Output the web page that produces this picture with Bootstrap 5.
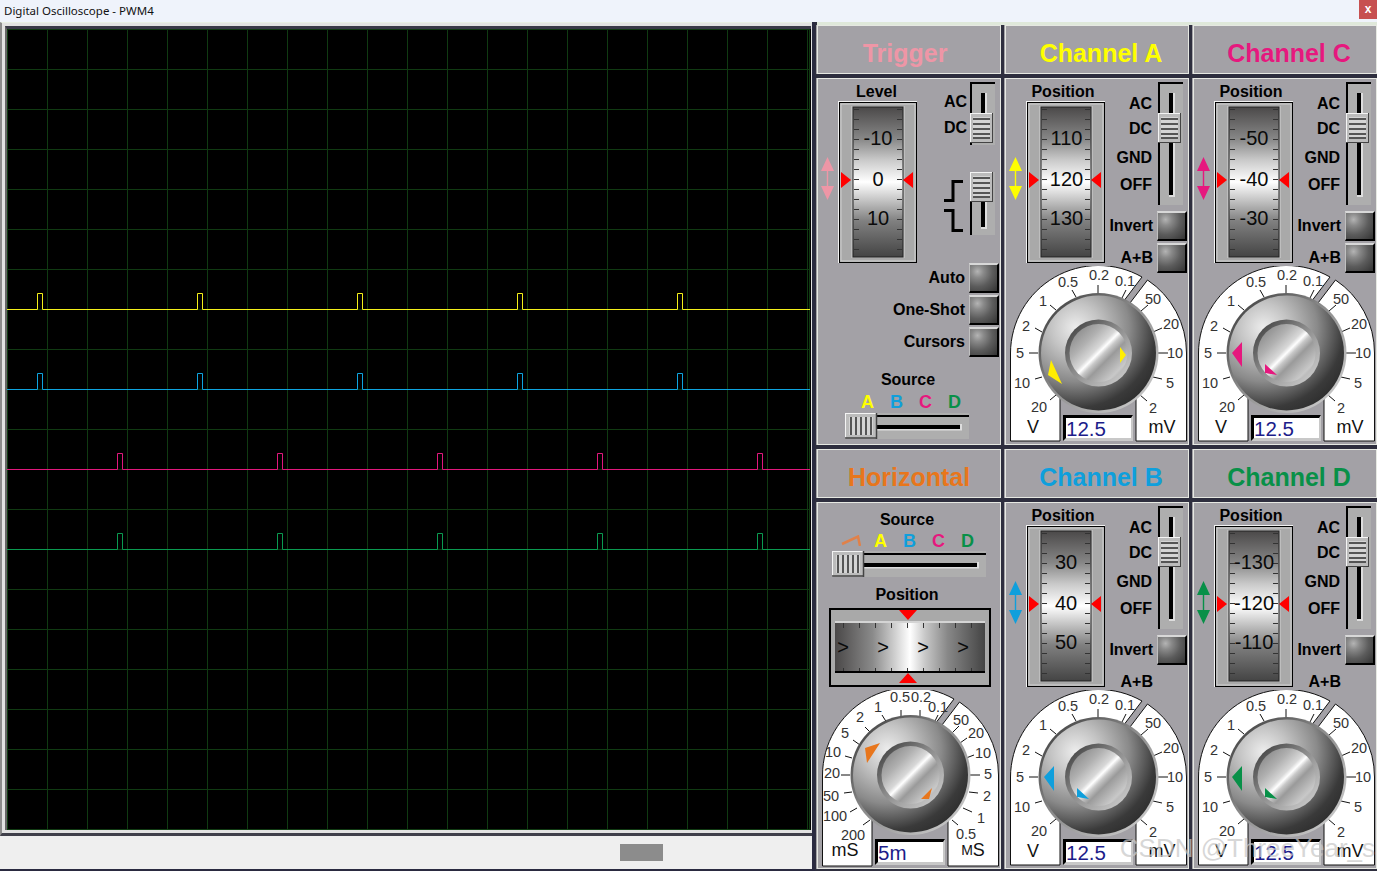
<!DOCTYPE html>
<html lang="en">
<head>
<meta charset="utf-8">
<title>Digital Oscilloscope - PWM4</title>
<link href="https://cdn.jsdelivr.net/npm/bootstrap@5.3.0/dist/css/bootstrap.min.css" rel="stylesheet">
<style>
html,body{margin:0;width:1377px;height:871px;overflow:hidden;background:#2e2e3e}
body{font-family:"Liberation Sans",Arial,sans-serif;color:#000;line-height:1.2}
svg{display:block;flex:none}
svg text{font-family:"Liberation Sans",Arial,sans-serif}
.defs{width:0;height:0}
.titlebar{height:22px;background:#eff3fb;font:11.5px/21px "Noto Sans",sans-serif;color:#111;padding-left:4px}
.close-x{width:18px;height:19px;background:#c75050;color:#fff;font:bold 12px/18px "Liberation Sans",sans-serif;text-align:center}
.main{height:849px}
.scope-col{width:815px;background:#2a2a40;padding-right:3px}
.scope-frame{height:814px;background:#e2e2e2;border-top:1px solid #e8efe4;border-left:2px solid #8c8c8c;padding:3px 1px 3px 3px;border-bottom:3px solid #3f3f4a}
.screen{height:804px;border-left:2px solid #666;border-top:3px solid #3a3a48;background:#000;overflow:hidden}
.status{height:33px;background:#efefef;padding-right:149px}
.status-thumb{width:43px;height:17px;background:#8c8c8c}
.deck{grid-template-columns:repeat(3,184px);grid-template-rows:49px 367px 49px 367px;gap:4px;border-top:3px solid #dfe8da;margin-left:2px}
.panel{background:#a3a1a6;box-shadow:inset 0 0 0 1px #e6e8e2,-1px 0 0 #a3a1a6;position:relative}
.phead{font-size:25px;font-weight:700;padding-top:7px}
.c-tr{color:#ee96a6}.c-a{color:#ff0}.c-b{color:#0f9fdc}.c-c{color:#e6187e}.c-d{color:#089048}.c-h{color:#e8761c}
.lb{font-size:16px;font-weight:700;line-height:20px;white-space:nowrap}
.top{height:195px}
.top-tr{height:185px}
.arrows{margin-left:4px;padding-top:79px;width:14px}
.tape-col{margin-left:3px;width:79px}
.tape-col .lb{height:23px;line-height:27px;text-align:center;padding-right:5px}
.tape-col .lb.lv{padding-right:2px}
.ctl-col{width:82px;padding-top:4px}
.cpl{height:129px}
.cpl-tr{height:63px}
.cpl-labels{padding-top:10px;margin-right:6px;text-align:right}
.cpl-labels-tr{padding-top:8px;margin-right:3px}
.l1{height:24px;line-height:24px}.l2{height:26px;line-height:26px}.l3{height:32px;line-height:32px}.l4{height:22px;line-height:22px}.l5{height:30px;line-height:28px}
.sl-r{margin-right:4px}
.edge{margin-top:27px;height:63px}
.edge svg:first-child{margin:8px 6px 0 0}
.led-row{height:30px;margin-bottom:2px}
.led-row .lb{margin-right:4px}
.ab-row{padding-right:30px}
.btn.led{width:30px;height:30px;padding:0;border:0;border-radius:0;background:radial-gradient(circle at 28% 25%,#b4b4b4 0,#8a8a8a 22%,#5c5c5c 55%,#333 100%);border-top:2px solid #d8d8d8;border-left:1px solid #c0c0c0;border-right:2px solid #000;border-bottom:2px solid #000}
.led-rows{padding-right:2px}
.src-t{margin-top:13px;text-align:center;padding-right:2px}
.abcd{font-size:18px;font-weight:700;line-height:22px;height:22px;margin-top:1px;padding-left:36px}
.abcd span{width:29px;text-align:center}
.sl-h{margin-left:28px}
.h-src{padding-top:8px;text-align:center;padding-right:4px}
.abcd-h{height:21px;margin-top:0;padding-left:24px}
.abcd-h svg{margin-right:5px}
.sl-hh{margin:0 0 0 15px}
.h-pos{margin-top:8px;text-align:center;padding-right:4px;margin-bottom:3px}
.h-tape{margin:0 0 3px 12px}
.dial{height:179px;margin-top:-7px}
.dial-h{margin-top:0}
.val{position:absolute;left:58px;top:149px;width:70px;height:26px;background:#fff;border-top:3px solid #000;border-left:3px solid #000;border-right:2px solid #c8c8c8;border-bottom:3px solid #c8c8c8;color:#1c1c8a;font-size:20.5px;line-height:21px;padding-left:0}
.sc{font-size:14.5px;text-anchor:middle;dominant-baseline:central;fill:#333}
.un{font-size:18px;text-anchor:middle;dominant-baseline:central;fill:#111}
.tn{font-size:20px;text-anchor:middle;dominant-baseline:central;fill:#0a0a0a}
.wm{position:absolute;right:2px;bottom:9px;font-size:26px;line-height:28px;color:rgba(200,200,200,.72);pointer-events:none}
</style>
</head>
<body>
<svg class="defs" xmlns="http://www.w3.org/2000/svg">
<defs>
<linearGradient id="gTape" x1="0" y1="0" x2="0" y2="1"><stop offset="0" stop-color="#4b4949"/><stop offset=".21" stop-color="#868686"/><stop offset=".35" stop-color="#c8c8c8"/><stop offset=".5" stop-color="#fff"/><stop offset=".63" stop-color="#c0c0c0"/><stop offset=".76" stop-color="#808080"/><stop offset="1" stop-color="#444"/></linearGradient>
<linearGradient id="gTapeH" x1="0" y1="0" x2="1" y2="0"><stop offset="0" stop-color="#4a4848"/><stop offset=".25" stop-color="#8a8a8a"/><stop offset=".4" stop-color="#d0d0d0"/><stop offset=".5" stop-color="#fff"/><stop offset=".6" stop-color="#c8c8c8"/><stop offset=".75" stop-color="#888"/><stop offset="1" stop-color="#444"/></linearGradient>
<radialGradient id="gKnob" cx=".3" cy=".28" r=".85"><stop offset="0" stop-color="#ededed"/><stop offset=".25" stop-color="#c4c4c4"/><stop offset=".55" stop-color="#8a8a8a"/><stop offset=".82" stop-color="#3a3a3a"/><stop offset="1" stop-color="#2a2a2a"/></radialGradient>
<linearGradient id="gEdge" x1="0" y1="0" x2="1" y2="1"><stop offset="0" stop-color="#333"/><stop offset=".45" stop-color="#8a8a8a"/><stop offset="1" stop-color="#d8d8d8"/></linearGradient>
<linearGradient id="gCap" x1="0" y1="0" x2="1" y2="1"><stop offset="0" stop-color="#777"/><stop offset=".3" stop-color="#b0b0b0"/><stop offset=".45" stop-color="#d8d8d8"/><stop offset=".5" stop-color="#fff"/><stop offset=".55" stop-color="#c8c8c8"/><stop offset=".63" stop-color="#9a9a9a"/><stop offset=".82" stop-color="#c8c8c8"/><stop offset="1" stop-color="#888"/></linearGradient>
<pattern id="pTicks" x="16" y="8" width="48" height="10" patternUnits="userSpaceOnUse"><path d="M0 .5h5M43 .5h5" stroke="#333"/></pattern>
<pattern id="pTicksH" x="6" y="15" width="16" height="49" patternUnits="userSpaceOnUse"><path d="M8.500 0v5M8.500 45v4" stroke="#333"/></pattern>
<pattern id="pGrid" width="40" height="40" patternUnits="userSpaceOnUse"><path d="M.5 0V40M0 .5H40" stroke="#103a12" fill="none"/></pattern>
<g id="tapeF">
<rect width="79" height="162" fill="#f2f2f2"/><rect x="1.5" y="1.5" width="77" height="160" fill="#a9a9a9" stroke="#000"/><rect x="3" y="3" width="74" height="157" fill="#a9a9a9" stroke="#d0d0d0"/>
<rect x="13" y="5" width="54" height="152" fill="#bdbdbd"/>
<rect x="15" y="6" width="50" height="150" fill="url(#gTape)" stroke="#222"/><rect x="16" y="7" width="48" height="148" fill="url(#pTicks)"/>
<path d="M3 71 13 79 3 87zM75 71 65 79 75 87z" fill="#f00"/>
</g>
<g id="thumbV"><rect width="23" height="30" fill="#bcbcbc"/><path d="M0 .5H23M.5 0V30" stroke="#f4f4f4"/><path d="M22.5 0V30M0 29.5H23" stroke="#444"/><rect x="3" y="4" width="17" height="22" fill="#d4d4d4"/><path d="M3 6H20M3 11H20M3 16H20M3 21H20M3 25H20" stroke="#555" stroke-width="2"/></g>
<g id="thumbH"><rect width="32" height="26" fill="#bcbcbc"/><path d="M0 .5H32M.5 0V26" stroke="#f4f4f4"/><path d="M31.5 0V26M0 25H32" stroke="#444" stroke-width="1.5"/><rect x="4" y="4" width="24" height="18" fill="#d4d4d4"/><path d="M6 4V22M11 4V22M16 4V22M21 4V22M26 4V22" stroke="#555" stroke-width="2"/></g>
<path id="dbl" d="M6.500 0 13 14H7.200V29H13L6.500 43 0 29H5.800V14H0z"/>
<g id="knob"><circle r="60" fill="url(#gEdge)"/><circle r="57.500" fill="url(#gKnob)"/><circle r="33.500" fill="url(#gEdge)"/><circle r="29" fill="url(#gCap)"/></g>
<g id="scaleV">
<path d="M5.500 175V87A88 88 0 0 1 137 11L118 36 93 87 55 130V175Z M142.500 14A88 88 0 0 1 181.500 87V175H131V125L93.500 87 125 37Z" fill="#fff" stroke="#111"/>
<path d="M93 19V29M67 24l4 7M121 24l-4 8M45 39l6 5M30 62l7 4M24 87H33M30 113l7-2M45 134l6-5M143 39l-7 6M157 62l-9 4M163 87H152M157 113l-9-2M142 135l-7-6" stroke="#111" fill="none"/>
<use href="#knob" x="93.500" y="87"/>
</g>
<g id="scaleH">
<path d="M5.500 176V85A88 88 0 0 1 137 9L118 34 93 85 55 130V176Z M142.500 12A88 88 0 0 1 181.500 85V176H131V125L93.500 85 125 35Z" fill="#fff" stroke="#111"/>
<path d="M84 20v8M103 20v8M121 25l-4 8M65 25l5 8M48 37l7 7M36 50l7 5M28 66l7 2M24 85H33M27 103l8-1M33 122l7-4M46 135l7-5M142 36l-7 7M150 48l-7 5M157 65l-8 3M163 85H153M161 103l-9-1M155 122l-9-4M141 135l-6-5" stroke="#111" fill="none"/>
<use href="#knob" x="93.500" y="85"/>
</g>
<path id="mkOther" d="M39 87 49 76V101ZM72 98 84 109 72 107Z"/>
<path id="mkA" d="M46 94 43 109 57 118ZM115 81 121 89 115 97Z"/>
</defs>
</svg>

<header class="titlebar d-flex justify-content-between">
<span>Digital Oscilloscope - PWM4</span><span class="close-x">x</span>
</header>

<main class="main d-flex">
<div class="scope-col d-flex flex-column">
<div class="scope-frame">
<div class="screen">
<svg width="803" height="801" xmlns="http://www.w3.org/2000/svg">
<rect width="803" height="801" fill="url(#pGrid)"/><path d="M802.500 0V801M0 800.500H803" stroke="#103a12"/>
<path fill="none" stroke="#f4f01a" d="M0 280.500H30.500V264.500H35.500V280.500H190.500V264.500H195.500V280.500H350.500V264.500H355.500V280.500H510.500V264.500H515.500V280.500H670.500V264.500H675.500V280.500H803"/>
<path fill="none" stroke="#0ea4de" d="M0 360.500H30.500V344.500H35.500V360.500H190.500V344.500H195.500V360.500H350.500V344.500H355.500V360.500H510.500V344.500H515.500V360.500H670.500V344.500H675.500V360.500H803"/>
<path fill="none" stroke="#e0187c" d="M0 440.500H110.500V424.500H115.500V440.500H270.500V424.500H275.500V440.500H430.500V424.500H435.500V440.500H590.500V424.500H595.500V440.500H750.500V424.500H755.500V440.500H803"/>
<path fill="none" stroke="#0a9a50" d="M0 520.500H110.500V504.500H115.500V520.500H270.500V504.500H275.500V520.500H430.500V504.500H435.500V520.500H590.500V504.500H595.500V520.500H750.500V504.500H755.500V520.500H803"/>
</svg>
</div>
</div>
<div class="status d-flex justify-content-end align-items-center"><div class="status-thumb"></div></div>
</div>

<div class="deck d-grid">
<!-- row 1 -->
<div class="panel phead c-tr d-flex justify-content-center align-items-center pe-2">Trigger</div>
<div class="panel phead c-a d-flex justify-content-center align-items-center ps-2">Channel A</div>
<div class="panel phead c-c d-flex justify-content-center align-items-center ps-2">Channel C</div>

<section class="panel">
<div class="top-tr d-flex">
<div class="arrows c-tr"><svg width="13" height="43"><use href="#dbl" fill="currentColor"/></svg></div>
<div class="tape-col"><div class="lb lv">Level</div>
<svg width="79" height="162"><use href="#tapeF"/><text class="tn" x="40" y="37">-10</text><text class="tn" x="40" y="78">0</text><text class="tn" x="40" y="117">10</text></svg></div>
<div class="ctl-col">
<div class="cpl-tr d-flex justify-content-end">
<div class="cpl-labels cpl-labels-tr"><div class="lb l1">AC</div><div class="lb l5">DC</div></div>
<svg class="sl-r" width="25" height="63"><rect width="25" height="63" fill="#aeaeae"/><path d="M1 63V1H25" stroke="#000" stroke-width="2" fill="none"/><rect x="11" y="11" width="4" height="30" fill="#000"/><rect x="15" y="11" width="2" height="30" fill="#ddd"/><use href="#thumbV" y="31"/></svg>
</div>
<div class="edge d-flex justify-content-end">
<svg width="20" height="52"><path d="M0 20.500H9V1.500H19M0 30.500H9V50.500H19" fill="none" stroke="#000" stroke-width="3"/></svg>
<svg class="sl-r" width="25" height="63"><rect width="25" height="63" fill="#aeaeae"/><path d="M1 63V0" stroke="#000" stroke-width="2"/><rect x="11" y="30" width="4" height="25" fill="#000"/><path d="M15 30h2v27h-6v-2h4z" fill="#ddd"/><use href="#thumbV"/></svg>
</div>
</div>
</div>
<div class="led-rows">
<div class="led-row d-flex justify-content-end align-items-center"><span class="lb">Auto</span><button class="btn led" type="button" aria-label="Auto"></button></div>
<div class="led-row d-flex justify-content-end align-items-center"><span class="lb">One-Shot</span><button class="btn led" type="button" aria-label="One-Shot"></button></div>
<div class="led-row d-flex justify-content-end align-items-center"><span class="lb">Cursors</span><button class="btn led" type="button" aria-label="Cursors"></button></div>
</div>
<div class="lb src-t">Source</div>
<div class="abcd d-flex"><span class="c-a">A</span><span class="c-b">B</span><span class="c-c">C</span><span class="c-d">D</span></div>
<svg class="sl-h" width="124" height="26"><rect width="124" height="26" fill="#aeaeae"/><path d="M32 3H124" stroke="#000" stroke-width="2"/><rect x="32" y="12" width="83" height="4" fill="#000"/><path d="M32 17.500H117V11H115V16H32z" fill="#ddd"/><use href="#thumbH"/></svg>
</section>

<section class="panel">
<div class="top d-flex">
<div class="arrows c-a"><svg width="13" height="43"><use href="#dbl" fill="currentColor"/></svg></div>
<div class="tape-col"><div class="lb">Position</div>
<svg width="79" height="162"><use href="#tapeF"/><text class="tn" x="40.500" y="37">110</text><text class="tn" x="40.500" y="78">120</text><text class="tn" x="40.500" y="117">130</text></svg></div>
<div class="ctl-col">
<div class="cpl d-flex justify-content-end">
<div class="cpl-labels"><div class="lb l1">AC</div><div class="lb l2">DC</div><div class="lb l3">GND</div><div class="lb l4">OFF</div></div>
<svg class="sl-r" width="25" height="123"><rect width="25" height="123" fill="#aeaeae"/><path d="M1 123V1H25" stroke="#000" stroke-width="2" fill="none"/><rect x="11" y="11" width="4" height="102" fill="#000"/><path d="M15 11h2v104h-6v-2h4z" fill="#ddd"/><use href="#thumbV" y="31"/></svg>
</div>
<div class="led-row d-flex justify-content-end align-items-center"><span class="lb">Invert</span><button class="btn led" type="button" aria-label="Invert"></button></div>
<div class="led-row d-flex justify-content-end align-items-center"><span class="lb">A+B</span><button class="btn led" type="button" aria-label="A+B"></button></div>
</div>
</div>
<div class="dial position-relative">
<svg width="184" height="179"><use href="#scaleV"/><use href="#mkA" fill="#ffee00"/>
<text class="sc" x="63" y="16">0.5</text><text class="sc" x="94" y="9">0.2</text><text class="sc" x="120" y="15">0.1</text><text class="sc" x="38" y="35">1</text><text class="sc" x="21" y="60">2</text><text class="sc" x="15" y="87">5</text><text class="sc" x="17" y="117">10</text><text class="sc" x="34" y="141">20</text><text class="sc" x="148" y="33">50</text><text class="sc" x="166" y="58">20</text><text class="sc" x="170" y="87">10</text><text class="sc" x="165" y="117">5</text><text class="sc" x="148" y="142">2</text><text class="un" x="28" y="161">V</text><text class="un" x="157" y="161">mV</text></svg>
<div class="val">12.5</div>
</div>
</section>

<section class="panel">
<div class="top d-flex">
<div class="arrows c-c"><svg width="13" height="43"><use href="#dbl" fill="currentColor"/></svg></div>
<div class="tape-col"><div class="lb">Position</div>
<svg width="79" height="162"><use href="#tapeF"/><text class="tn" x="40" y="37">-50</text><text class="tn" x="40" y="78">-40</text><text class="tn" x="40" y="117">-30</text></svg></div>
<div class="ctl-col">
<div class="cpl d-flex justify-content-end">
<div class="cpl-labels"><div class="lb l1">AC</div><div class="lb l2">DC</div><div class="lb l3">GND</div><div class="lb l4">OFF</div></div>
<svg class="sl-r" width="25" height="123"><rect width="25" height="123" fill="#aeaeae"/><path d="M1 123V1H25" stroke="#000" stroke-width="2" fill="none"/><rect x="11" y="11" width="4" height="102" fill="#000"/><path d="M15 11h2v104h-6v-2h4z" fill="#ddd"/><use href="#thumbV" y="31"/></svg>
</div>
<div class="led-row d-flex justify-content-end align-items-center"><span class="lb">Invert</span><button class="btn led" type="button" aria-label="Invert"></button></div>
<div class="led-row d-flex justify-content-end align-items-center"><span class="lb">A+B</span><button class="btn led" type="button" aria-label="A+B"></button></div>
</div>
</div>
<div class="dial position-relative">
<svg width="184" height="179"><use href="#scaleV"/><use href="#mkOther" fill="#e6187e"/>
<text class="sc" x="63" y="16">0.5</text><text class="sc" x="94" y="9">0.2</text><text class="sc" x="120" y="15">0.1</text><text class="sc" x="38" y="35">1</text><text class="sc" x="21" y="60">2</text><text class="sc" x="15" y="87">5</text><text class="sc" x="17" y="117">10</text><text class="sc" x="34" y="141">20</text><text class="sc" x="148" y="33">50</text><text class="sc" x="166" y="58">20</text><text class="sc" x="170" y="87">10</text><text class="sc" x="165" y="117">5</text><text class="sc" x="148" y="142">2</text><text class="un" x="28" y="161">V</text><text class="un" x="157" y="161">mV</text></svg>
<div class="val">12.5</div>
</div>
</section>

<!-- row 2 -->
<div class="panel phead c-h d-flex justify-content-center align-items-center">Horizontal</div>
<div class="panel phead c-b d-flex justify-content-center align-items-center ps-2">Channel B</div>
<div class="panel phead c-d d-flex justify-content-center align-items-center ps-2">Channel D</div>

<section class="panel">
<div class="lb h-src">Source</div>
<div class="abcd abcd-h d-flex align-items-center"><svg width="20" height="11"><path d="M1 9 17 1.500 19 11" fill="none" stroke="#e0814a" stroke-width="2.500"/></svg><span class="c-a">A</span><span class="c-b">B</span><span class="c-c">C</span><span class="c-d">D</span></div>
<svg class="sl-hh" width="154" height="26"><rect width="154" height="26" fill="#aeaeae"/><path d="M32 3H154" stroke="#000" stroke-width="2"/><rect x="32" y="12" width="113" height="4" fill="#000"/><path d="M32 17.500H147V11H145V16H32z" fill="#ddd"/><use href="#thumbH"/></svg>
<div class="lb h-pos">Position</div>
<svg class="h-tape" width="162" height="79">
<rect width="162" height="79" fill="#000"/><rect x="2" y="2" width="158" height="75" fill="#a9a9a9"/>
<rect x="6" y="13" width="150" height="2" fill="#d4d4d4"/><rect x="6" y="15" width="150" height="49" fill="url(#gTapeH)"/><rect x="6" y="15" width="150" height="49" fill="url(#pTicksH)"/><rect x="6" y="63" width="150" height="2" fill="#000"/>
<path d="M70 2H88L79 12zM70 75H88L79 65z" fill="#f00"/>
<text class="tn" x="14" y="39">&gt;</text><text class="tn" x="54" y="39">&gt;</text><text class="tn" x="94" y="39">&gt;</text><text class="tn" x="134" y="39">&gt;</text>
</svg>
<div class="dial dial-h position-relative">
<svg width="184" height="179"><use href="#scaleH"/><path d="M48 58 63 53 50 73ZM104 109 115 98 112 109Z" fill="#e8761c"/>
<text class="sc" x="83" y="7">0.5</text><text class="sc" x="104" y="7">0.2</text><text class="sc" x="121" y="17">0.1</text><text class="sc" x="61" y="17">1</text><text class="sc" x="43" y="27">2</text><text class="sc" x="28" y="43">5</text><text class="sc" x="16" y="62">10</text><text class="sc" x="15" y="83">20</text><text class="sc" x="14" y="106">50</text><text class="sc" x="18" y="126">100</text><text class="sc" x="36" y="145">200</text><text class="sc" x="144" y="30">50</text><text class="sc" x="159" y="43">20</text><text class="sc" x="166" y="63">10</text><text class="sc" x="171" y="84">5</text><text class="sc" x="170" y="106">2</text><text class="sc" x="164" y="128">1</text><text class="sc" x="149" y="144">0.5</text><text class="un" x="28" y="160">mS</text><text class="un" x="156" y="160"><tspan font-size="14">M</tspan>S</text></svg>
<div class="val">5m</div>
</div>
</section>

<section class="panel">
<div class="top d-flex">
<div class="arrows c-b"><svg width="13" height="43"><use href="#dbl" fill="currentColor"/></svg></div>
<div class="tape-col"><div class="lb">Position</div>
<svg width="79" height="162"><use href="#tapeF"/><text class="tn" x="40" y="37">30</text><text class="tn" x="40" y="78">40</text><text class="tn" x="40" y="117">50</text></svg></div>
<div class="ctl-col">
<div class="cpl d-flex justify-content-end">
<div class="cpl-labels"><div class="lb l1">AC</div><div class="lb l2">DC</div><div class="lb l3">GND</div><div class="lb l4">OFF</div></div>
<svg class="sl-r" width="25" height="123"><rect width="25" height="123" fill="#aeaeae"/><path d="M1 123V1H25" stroke="#000" stroke-width="2" fill="none"/><rect x="11" y="11" width="4" height="102" fill="#000"/><path d="M15 11h2v104h-6v-2h4z" fill="#ddd"/><use href="#thumbV" y="31"/></svg>
</div>
<div class="led-row d-flex justify-content-end align-items-center"><span class="lb">Invert</span><button class="btn led" type="button" aria-label="Invert"></button></div>
<div class="led-row ab-row d-flex justify-content-end align-items-center"><span class="lb">A+B</span></div>
</div>
</div>
<div class="dial position-relative">
<svg width="184" height="179"><use href="#scaleV"/><use href="#mkOther" fill="#0f9fdc"/>
<text class="sc" x="63" y="16">0.5</text><text class="sc" x="94" y="9">0.2</text><text class="sc" x="120" y="15">0.1</text><text class="sc" x="38" y="35">1</text><text class="sc" x="21" y="60">2</text><text class="sc" x="15" y="87">5</text><text class="sc" x="17" y="117">10</text><text class="sc" x="34" y="141">20</text><text class="sc" x="148" y="33">50</text><text class="sc" x="166" y="58">20</text><text class="sc" x="170" y="87">10</text><text class="sc" x="165" y="117">5</text><text class="sc" x="148" y="142">2</text><text class="un" x="28" y="161">V</text><text class="un" x="157" y="161">mV</text></svg>
<div class="val">12.5</div>
</div>
</section>

<section class="panel">
<div class="top d-flex">
<div class="arrows c-d"><svg width="13" height="43"><use href="#dbl" fill="currentColor"/></svg></div>
<div class="tape-col"><div class="lb">Position</div>
<svg width="79" height="162"><use href="#tapeF"/><text class="tn" x="40" y="37">-130</text><text class="tn" x="40" y="78">-120</text><text class="tn" x="40" y="117">-110</text></svg></div>
<div class="ctl-col">
<div class="cpl d-flex justify-content-end">
<div class="cpl-labels"><div class="lb l1">AC</div><div class="lb l2">DC</div><div class="lb l3">GND</div><div class="lb l4">OFF</div></div>
<svg class="sl-r" width="25" height="123"><rect width="25" height="123" fill="#aeaeae"/><path d="M1 123V1H25" stroke="#000" stroke-width="2" fill="none"/><rect x="11" y="11" width="4" height="102" fill="#000"/><path d="M15 11h2v104h-6v-2h4z" fill="#ddd"/><use href="#thumbV" y="31"/></svg>
</div>
<div class="led-row d-flex justify-content-end align-items-center"><span class="lb">Invert</span><button class="btn led" type="button" aria-label="Invert"></button></div>
<div class="led-row ab-row d-flex justify-content-end align-items-center"><span class="lb">A+B</span></div>
</div>
</div>
<div class="dial position-relative">
<svg width="184" height="179"><use href="#scaleV"/><use href="#mkOther" fill="#089048"/>
<text class="sc" x="63" y="16">0.5</text><text class="sc" x="94" y="9">0.2</text><text class="sc" x="120" y="15">0.1</text><text class="sc" x="38" y="35">1</text><text class="sc" x="21" y="60">2</text><text class="sc" x="15" y="87">5</text><text class="sc" x="17" y="117">10</text><text class="sc" x="34" y="141">20</text><text class="sc" x="148" y="33">50</text><text class="sc" x="166" y="58">20</text><text class="sc" x="170" y="87">10</text><text class="sc" x="165" y="117">5</text><text class="sc" x="148" y="142">2</text><text class="un" x="28" y="161">V</text><text class="un" x="157" y="161">mV</text></svg>
<div class="val">12.5</div>
</div>
</section>
</div>
</main>
<div class="wm">CSDN @ThreeYear_s</div>
<script src="https://cdn.jsdelivr.net/npm/bootstrap@5.3.0/dist/js/bootstrap.bundle.min.js"></script>
</body>
</html>
